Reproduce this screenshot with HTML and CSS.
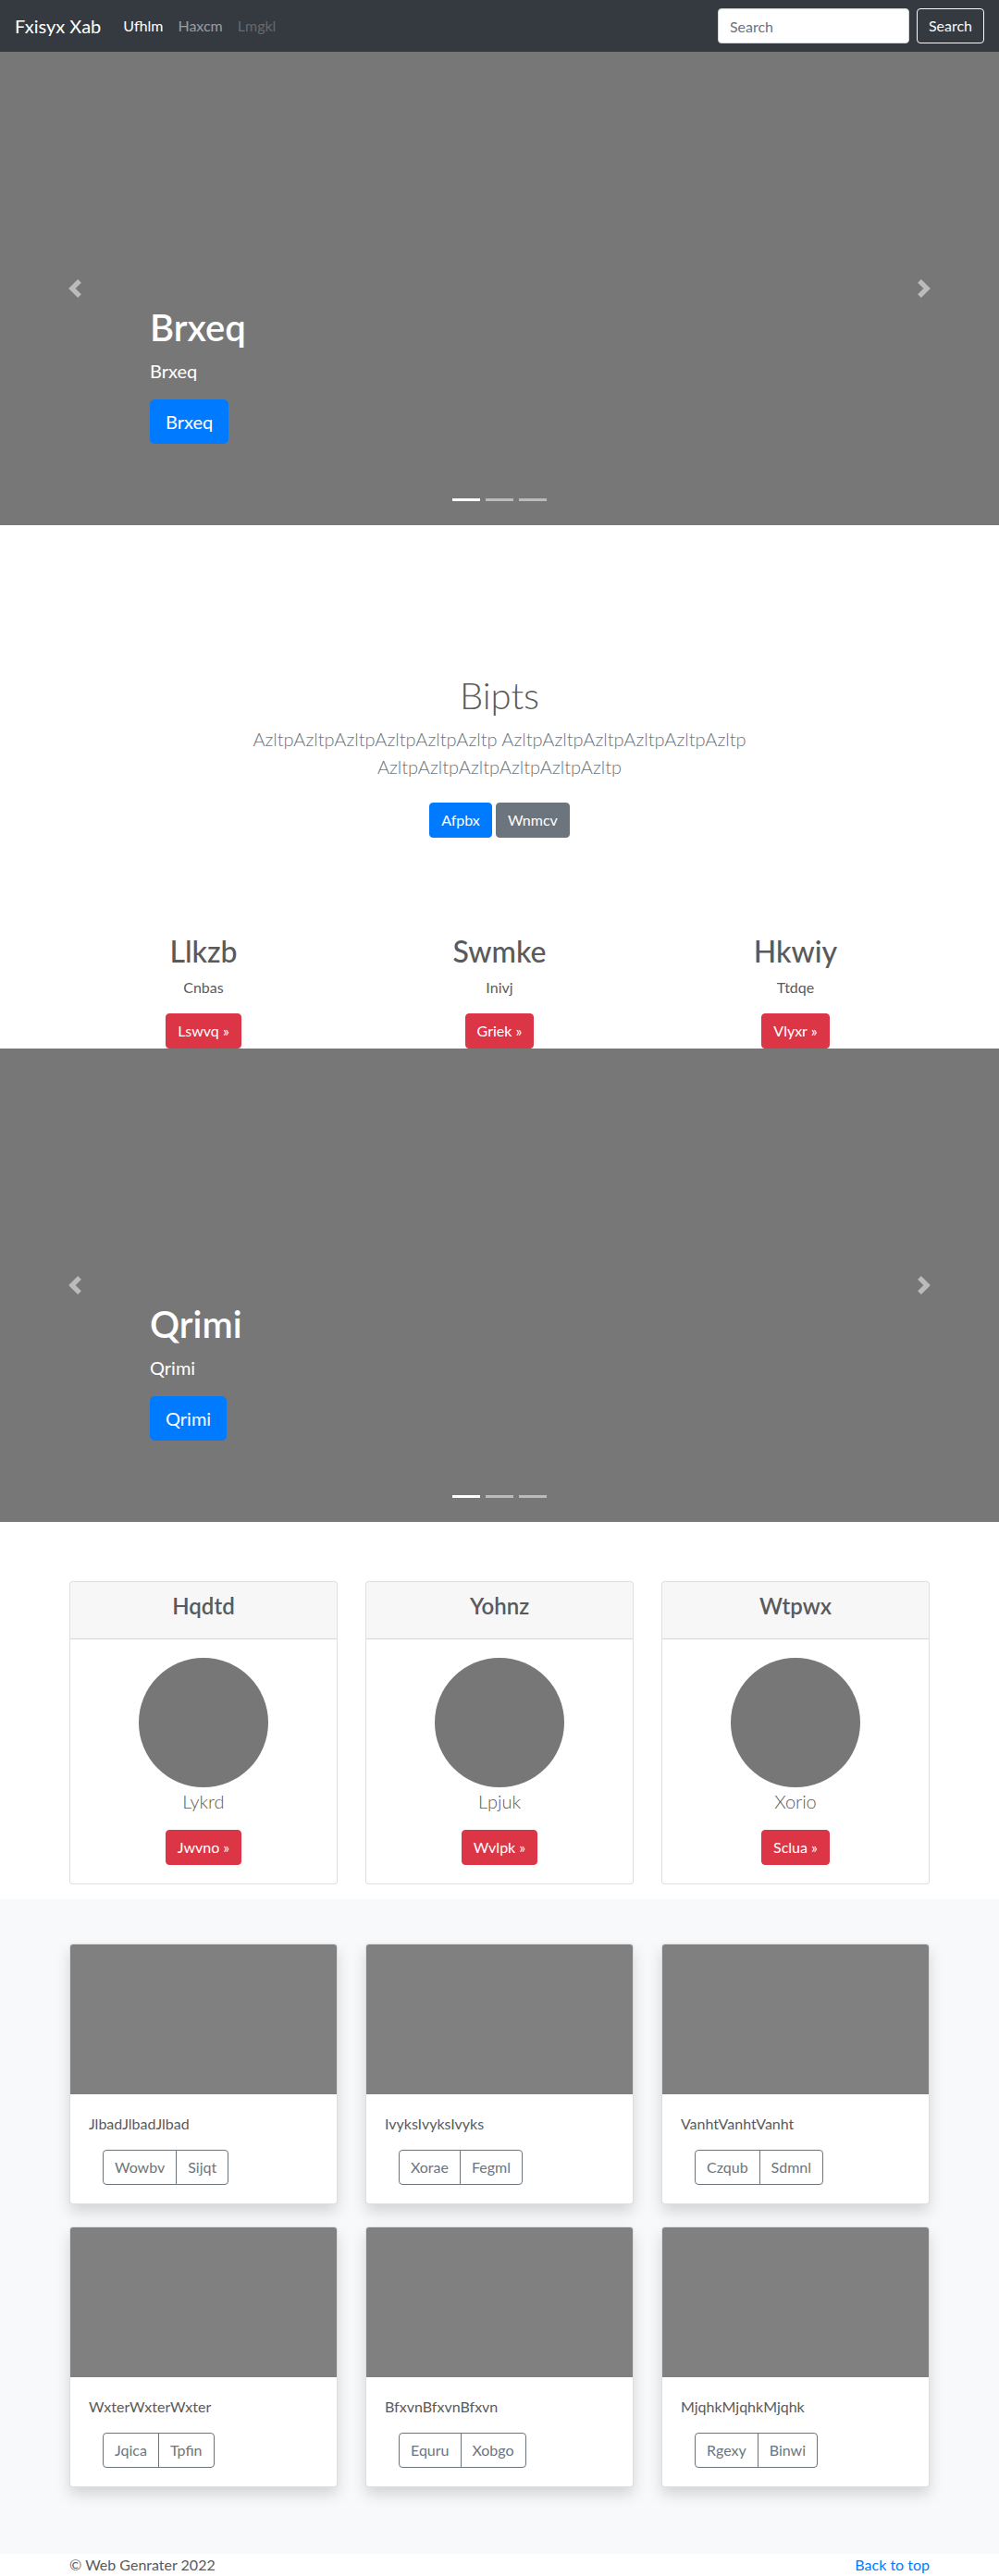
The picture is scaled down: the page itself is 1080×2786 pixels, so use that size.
FILE: index.html
```html
<!DOCTYPE html>
<html lang="en">
<head>
<meta charset="utf-8">
<title>Fxisyx Xab</title>
<link rel="stylesheet" href="styles.css">
</head>
<body>
<header>
  <nav class="navbar">
    <a class="brand" href="#">Fxisyx Xab</a>
    <ul class="nav">
      <li><a class="nav-link active" href="#">Ufhlm</a></li>
      <li><a class="nav-link" href="#">Haxcm</a></li>
      <li><a class="nav-link disabled" href="#">Lmgkl</a></li>
    </ul>
    <form class="search">
      <input class="search-input" type="text" placeholder="Search">
      <button class="btn btn-outline-light" type="button">Search</button>
    </form>
  </nav>
</header>

<main>
  <div class="carousel">
    <ol class="indicators">
      <li class="active"></li>
      <li></li>
      <li></li>
    </ol>
    <div class="caption">
      <h1 class="caption-title">Brxeq</h1>
      <p class="caption-text">Brxeq</p>
      <p class="caption-action"><a class="btn btn-lg btn-primary" href="#">Brxeq</a></p>
    </div>
    <a class="control control-prev" href="#"><svg viewBox="0 0 8 8" width="20" height="20"><path fill="#fff" d="M5.25 0l-4 4 4 4 1.5-1.5L4.25 4l2.5-2.5L5.25 0z"/></svg></a>
    <a class="control control-next" href="#"><svg viewBox="0 0 8 8" width="20" height="20"><path fill="#fff" d="M2.75 0l-1.5 1.5L3.75 4l-2.5 2.5L2.75 8l4-4-4-4z"/></svg></a>
  </div>

  <section class="jumbotron">
    <div class="jumbo-container">
      <h1 class="jumbo-heading">Bipts</h1>
      <p class="lead muted">AzltpAzltpAzltpAzltpAzltpAzltp AzltpAzltpAzltpAzltpAzltpAzltp AzltpAzltpAzltpAzltpAzltpAzltp</p>
      <p class="jumbo-actions">
        <a class="btn btn-primary" href="#">Afpbx</a>
        <a class="btn btn-secondary" href="#">Wnmcv</a>
      </p>
    </div>
  </section>

  <div class="container">
    <div class="row marketing">
      <div class="col">
        <h2 class="mk-title">Llkzb</h2>
        <p class="mk-text">Cnbas</p>
        <p class="mk-action"><a class="btn btn-danger" href="#">Lswvq &raquo;</a></p>
      </div>
      <div class="col">
        <h2 class="mk-title">Swmke</h2>
        <p class="mk-text">Inivj</p>
        <p class="mk-action"><a class="btn btn-danger" href="#">Griek &raquo;</a></p>
      </div>
      <div class="col">
        <h2 class="mk-title">Hkwiy</h2>
        <p class="mk-text">Ttdqe</p>
        <p class="mk-action"><a class="btn btn-danger" href="#">Vlyxr &raquo;</a></p>
      </div>
    </div>
  </div>

  <div class="carousel">
    <ol class="indicators">
      <li class="active"></li>
      <li></li>
      <li></li>
    </ol>
    <div class="caption">
      <h1 class="caption-title">Qrimi</h1>
      <p class="caption-text">Qrimi</p>
      <p class="caption-action"><a class="btn btn-lg btn-primary" href="#">Qrimi</a></p>
    </div>
    <a class="control control-prev" href="#"><svg viewBox="0 0 8 8" width="20" height="20"><path fill="#fff" d="M5.25 0l-4 4 4 4 1.5-1.5L4.25 4l2.5-2.5L5.25 0z"/></svg></a>
    <a class="control control-next" href="#"><svg viewBox="0 0 8 8" width="20" height="20"><path fill="#fff" d="M2.75 0l-1.5 1.5L3.75 4l-2.5 2.5L2.75 8l4-4-4-4z"/></svg></a>
  </div>

  <div class="container">
    <div class="card-deck">
      <div class="card">
        <div class="card-header"><h4 class="card-heading">Hqdtd</h4></div>
        <div class="card-body center">
          <div class="avatar"></div>
          <p class="avatar-name">Lykrd</p>
          <a class="btn btn-danger" href="#">Jwvno &raquo;</a>
        </div>
      </div>
      <div class="card">
        <div class="card-header"><h4 class="card-heading">Yohnz</h4></div>
        <div class="card-body center">
          <div class="avatar"></div>
          <p class="avatar-name">Lpjuk</p>
          <a class="btn btn-danger" href="#">Wvlpk &raquo;</a>
        </div>
      </div>
      <div class="card">
        <div class="card-header"><h4 class="card-heading">Wtpwx</h4></div>
        <div class="card-body center">
          <div class="avatar"></div>
          <p class="avatar-name">Xorio</p>
          <a class="btn btn-danger" href="#">Sclua &raquo;</a>
        </div>
      </div>
    </div>
  </div>

  <section class="album">
    <div class="container">
      <div class="row">
        <div class="col">
          <div class="card shadow">
            <div class="thumb"></div>
            <div class="card-body">
              <p class="card-text">JlbadJlbadJlbad</p>
              <div class="actions"><div class="btn-group"><a class="btn btn-outline-secondary" href="#">Wowbv</a><a class="btn btn-outline-secondary" href="#">Sijqt</a></div></div>
            </div>
          </div>
        </div>
        <div class="col">
          <div class="card shadow">
            <div class="thumb"></div>
            <div class="card-body">
              <p class="card-text">IvyksIvyksIvyks</p>
              <div class="actions"><div class="btn-group"><a class="btn btn-outline-secondary" href="#">Xorae</a><a class="btn btn-outline-secondary" href="#">Fegml</a></div></div>
            </div>
          </div>
        </div>
        <div class="col">
          <div class="card shadow">
            <div class="thumb"></div>
            <div class="card-body">
              <p class="card-text">VanhtVanhtVanht</p>
              <div class="actions"><div class="btn-group"><a class="btn btn-outline-secondary" href="#">Czqub</a><a class="btn btn-outline-secondary" href="#">Sdmnl</a></div></div>
            </div>
          </div>
        </div>
        <div class="col">
          <div class="card shadow">
            <div class="thumb"></div>
            <div class="card-body">
              <p class="card-text">WxterWxterWxter</p>
              <div class="actions"><div class="btn-group"><a class="btn btn-outline-secondary" href="#">Jqica</a><a class="btn btn-outline-secondary" href="#">Tpfin</a></div></div>
            </div>
          </div>
        </div>
        <div class="col">
          <div class="card shadow">
            <div class="thumb"></div>
            <div class="card-body">
              <p class="card-text">BfxvnBfxvnBfxvn</p>
              <div class="actions"><div class="btn-group"><a class="btn btn-outline-secondary" href="#">Equru</a><a class="btn btn-outline-secondary" href="#">Xobgo</a></div></div>
            </div>
          </div>
        </div>
        <div class="col">
          <div class="card shadow">
            <div class="thumb"></div>
            <div class="card-body">
              <p class="card-text">MjqhkMjqhkMjqhk</p>
              <div class="actions"><div class="btn-group"><a class="btn btn-outline-secondary" href="#">Rgexy</a><a class="btn btn-outline-secondary" href="#">Binwi</a></div></div>
            </div>
          </div>
        </div>
      </div>
    </div>
  </section>
</main>

<footer class="footer">
  <div class="container footer-inner">
    <p class="copy">&copy; Web Genrater 2022</p>
    <p class="to-top"><a href="#">Back to top</a></p>
  </div>
</footer>
</body>
</html>
```

FILE: styles.css
```css
*, *::before, *::after { box-sizing: border-box; }

html, body {
  margin: 0;
  padding: 0;
}

body {
  font-family: Lato, "Open Sans", "Liberation Sans", sans-serif;
  font-size: 16px;
  line-height: 1.5;
  color: #5a5a5a;
  background: #fff;
}

a { text-decoration: none; color: #007bff; }
p { margin: 0 0 16px; }
h1, h2, h4 { margin: 0 0 8px; line-height: 1.2; font-weight: 500; }

/* Navbar */
.navbar {
  display: flex;
  align-items: center;
  height: 56px;
  padding: 8px 16px;
  background: #343a40;
}
.brand {
  color: #fff;
  font-size: 20px;
  line-height: 30px;
  padding: 5px 0;
  margin-right: 16px;
}
.nav {
  display: flex;
  list-style: none;
  margin: 0 auto 0 0;
  padding: 0;
}
.nav-link {
  display: block;
  padding: 8px;
  color: rgba(255,255,255,.5);
}
.nav-link.active { color: #fff; }
.nav-link.disabled { color: rgba(255,255,255,.25); }

.search { display: flex; align-items: center; }
.search-input {
  width: 207px;
  height: 38px;
  padding: 6px 12px;
  font: inherit;
  color: #495057;
  border: 1px solid #ced4da;
  border-radius: 4px;
  background: #fff;
  margin-right: 8px;
}
.search-input::placeholder { color: #6c757d; }

/* Buttons */
.btn {
  display: inline-block;
  font-family: inherit;
  font-size: 16px;
  line-height: 1.5;
  padding: 6px 12px;
  border: 1px solid transparent;
  border-radius: 4px;
  text-align: center;
  vertical-align: middle;
  background: transparent;
  cursor: pointer;
}
.btn-lg { padding: 8px 16px; font-size: 20px; border-radius: 5px; }
.btn-primary { background: #007bff; border-color: #007bff; color: #fff; }
.btn-secondary { background: #6c757d; border-color: #6c757d; color: #fff; }
.btn-danger { background: #dc3545; border-color: #dc3545; color: #fff; }
.btn-outline-light { color: #f8f9fa; border-color: #f8f9fa; }
.btn-outline-secondary { color: #6c757d; border-color: #6c757d; background: transparent; }

/* Carousel */
.carousel {
  position: relative;
  height: 512px;
  background: #777;
  margin-bottom: 64px;
  overflow: hidden;
}
.indicators {
  position: absolute;
  left: 0;
  right: 0;
  bottom: 0;
  display: flex;
  justify-content: center;
  list-style: none;
  padding: 0;
  margin: 0 15% 16px;
  z-index: 15;
}
.indicators li {
  width: 30px;
  height: 3px;
  margin: 10px 3px;
  background: #fff;
  opacity: .5;
}
.indicators li.active { opacity: 1; }

.caption {
  position: absolute;
  left: 15%;
  right: 15%;
  bottom: 52px;
  padding: 20px 0;
  color: #fff;
  text-align: left;
  z-index: 10;
}
.caption-title { font-size: 40px; font-weight: 600; }
.caption-text { font-size: 20px; line-height: 30px; }
.caption-action { margin-bottom: 16px; }

.control {
  position: absolute;
  top: 0;
  bottom: 0;
  width: 15%;
  display: flex;
  align-items: center;
  justify-content: center;
  opacity: .5;
}
.control-prev { left: 0; }
.control-next { right: 0; }
.control svg { display: block; }

/* Jumbotron */
.jumbotron {
  padding: 96px 0;
  text-align: center;
}
.jumbo-container {
  max-width: 640px;
  margin: 0 auto;
  padding: 0 15px;
}
.jumbo-heading { font-size: 40px; font-weight: 300; }
.lead { font-size: 20px; font-weight: 300; }
.muted { color: #6c757d; }
.jumbo-actions { margin: 0; }
.jumbo-actions .btn { margin: 8px 0; }

/* Layout */
.container {
  width: 960px;
  margin: 0 auto;
  padding: 0 15px;
}
.row {
  display: flex;
  flex-wrap: wrap;
  margin: 0 -15px;
}
.col {
  flex: 0 0 33.3333%;
  max-width: 33.3333%;
  padding: 0 15px;
}

/* Marketing */
.marketing .col { text-align: center; }
.mk-title { font-size: 32px; font-weight: 500; }
.mk-text { margin: 0 12px 16px; }
.mk-action { margin: 0; }

/* Cards */
.card-deck {
  display: flex;
  margin: 0 -15px 16px;
}
.card-deck .card {
  flex: 1 0 0;
  margin: 0 15px;
}
.card {
  background: #fff;
  border: 1px solid rgba(0,0,0,.125);
  border-radius: 4px;
  overflow: hidden;
}
.card-header {
  padding: 12px 20px;
  background: rgba(0,0,0,.03);
  border-bottom: 1px solid rgba(0,0,0,.125);
  text-align: center;
}
.card-heading { font-size: 24px; font-weight: 600; }
.card-body { padding: 20px; }
.center { text-align: center; }
.avatar {
  width: 140px;
  height: 140px;
  border-radius: 50%;
  background: #777;
  margin: 0 auto;
}
.avatar-name {
  font-size: 20px;
  font-weight: 300;
  line-height: 30px;
  color: #5a5a5a;
}

/* Album */
.album {
  background: #f8f9fa;
  padding: 48px 0;
}
.album .card { margin-bottom: 24px; }
.shadow { box-shadow: 0 8px 16px rgba(0,0,0,.15); }
.thumb {
  height: 162px;
  background: #808080;
}
.card-text { margin-bottom: 16px; }
.actions { padding-left: 15px; }
.btn-group { display: inline-flex; }
.btn-group .btn:first-child { border-top-right-radius: 0; border-bottom-right-radius: 0; }
.btn-group .btn + .btn { margin-left: -1px; border-top-left-radius: 0; border-bottom-left-radius: 0; }

/* Footer */
.footer-inner {
  display: flex;
  justify-content: space-between;
}
.copy { margin: 0; }
.to-top { margin: 0; }
```
